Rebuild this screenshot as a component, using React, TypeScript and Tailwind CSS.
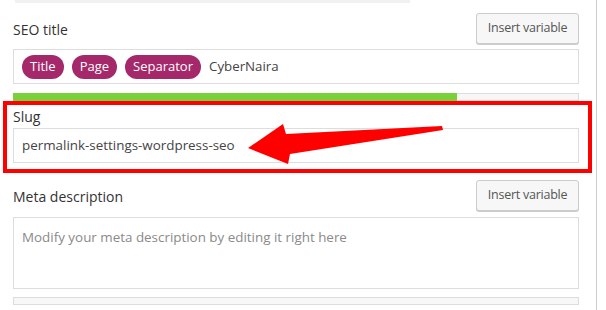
import React from "react";

const font = { fontFamily: '"Open Sans", "Noto Sans", sans-serif' };

function Pill({ children }: { children: React.ReactNode }) {
  return (
    <span className="inline-flex h-[24px] items-center rounded-full bg-[#a4286a] px-[8px] text-[13px] leading-none text-white">
      {children}
    </span>
  );
}

function InsertButton() {
  return (
    <button className="h-[31px] w-[103px] rounded-[3px] border border-[#cccccc] bg-[#f7f7f7] text-[12.5px] tracking-[-0.25px] text-[#555555] shadow-[0_1px_0_#cccccc]">
      Insert variable
    </button>
  );
}

export default function App() {
  return (
    <div className="relative h-[310px] w-[606px] overflow-hidden bg-white" style={font}>
      <div className="h-[310px] w-[597px] border-r border-[#cccccc]">
        <div className="ml-[15px] h-[3px] w-[395px] bg-[#f1f1f1]" />
        <div className="pl-[13px] pr-[17px]">
          {/* SEO title */}
          <div className="mt-[10px] flex h-[31px] items-end justify-between">
            <span className="pb-[4px] text-[14px] font-medium text-[#333333]">SEO title</span>
            <InsertButton />
          </div>
          <div className="mt-[5px] flex h-[35px] items-center gap-[8px] border border-[#dddddd] px-[8px]">
            <Pill>Title</Pill>
            <Pill>Page</Pill>
            <Pill>Separator</Pill>
            <span className="text-[13.3px] text-[#444444]">CyberNaira</span>
          </div>
          <div className="mt-[9px] h-[8px] border border-[#dddddd] bg-[#f7f7f7]">
            <div className="-m-px h-[8px] w-[444px] bg-[#7ad03a]" />
          </div>
          {/* Slug */}
          <div className="mt-[6px] h-[20px] text-[14px] font-medium leading-[20px] text-[#333333]">Slug</div>
          <div className="mt-[1px] flex h-[35px] items-center border border-[#dddddd] px-[8px] text-[13.4px] text-[#444444]">
            permalink-settings-wordpress-seo
          </div>
          {/* Meta description */}
          <div className="mt-[17px] flex h-[31px] items-end justify-between">
            <span className="pb-[4px] text-[14px] font-medium text-[#333333]">Meta description</span>
            <InsertButton />
          </div>
          <div className="mt-[6px] h-[72px] border border-[#dddddd] px-[8px] pt-[9px] text-[13.4px] text-[#8a8a8a]">
            Modify your meta description by editing it right here
          </div>
          <div className="mt-[8px] h-[8px] border border-[#dddddd] bg-[#f7f7f7]" />
        </div>
      </div>

      {/* Annotation: red box */}
      <div className="pointer-events-none absolute left-[3px] top-[101px] h-[72px] w-[589px] border-[4px] border-[#ff0000]" />
      {/* Annotation: red arrow */}
      <svg className="pointer-events-none absolute left-0 top-0" width="606" height="310">
        <polygon
          points="248,148 283,124 286,134 442,126 443,130 290,154 288,164"
          fill="#ff0000"
        />
      </svg>
    </div>
  );
}
